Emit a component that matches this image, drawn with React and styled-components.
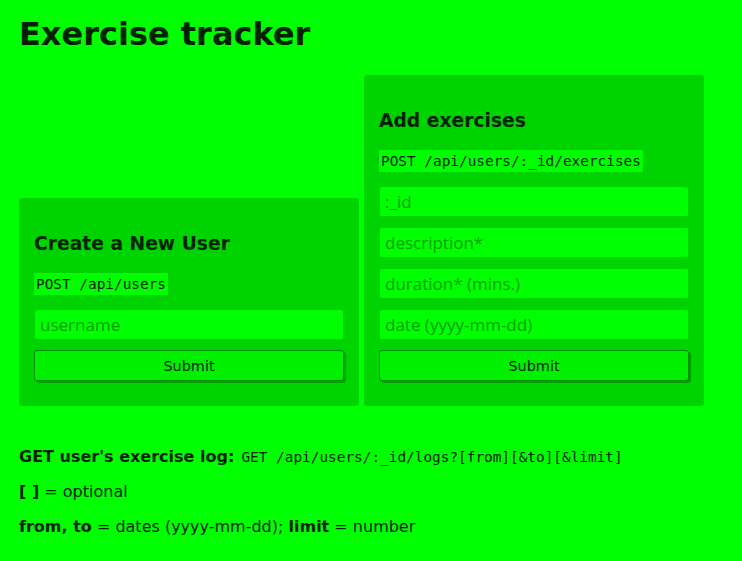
import styled, { createGlobalStyle } from "styled-components"

const GlobalStyle = createGlobalStyle`
    html, body {
        margin: 0;
        background: #00ff00;
    }
    body {
        font-family: "DejaVu Sans", sans-serif;
        color: #002200;
    }
`

const Page = styled.div`
    padding: 16px 19px 20px;
`

const Title = styled.h1`
    margin: 0 0 22px;
    font-size: 32px;
    font-weight: bold;
    line-height: 37px;
`

const Panels = styled.div`
    display: flex;
    align-items: flex-end;
    gap: 5px;
`

const Panel = styled.form`
    width: 340px;
    box-sizing: border-box;
    background: #00d400;
    border-radius: 3px;
    padding: 17px 15px 25px;
    display: flex;
    flex-direction: column;
`

const PanelTitle = styled.h3`
    margin: 18px 0 18px;
    font-size: 18.72px;
    line-height: 22px;
`

const Code = styled.code`
    font-family: "DejaVu Sans Mono", monospace;
    font-size: 14.4px;
    line-height: 16px;
    background: #00ff00;
    padding: ${(p) => (p.$block ? "3px 2px" : "2px 2px")};
    display: inline-block;
    align-self: flex-start;
    margin-bottom: ${(p) => (p.$block ? "14px" : "0")};
`

const Input = styled.input`
    box-sizing: border-box;
    width: 100%;
    height: 31px;
    margin: 0 0 10px;
    border: 1px solid #00d400;
    border-radius: 3px;
    background: #00ff00;
    padding: 0 5px;
    font-family: "Open Sans", sans-serif;
    font-size: 17px;
    color: #002200;
    outline: none;
    &::placeholder {
        color: #00a000;
    }
`

const Button = styled.button`
    box-sizing: border-box;
    width: 100%;
    height: 31px;
    margin: 0;
    border: 1px solid #008a00;
    border-radius: 3px;
    background: #00f000;
    box-shadow: 2px 2px 0 #00a000;
    font-family: "DejaVu Sans", sans-serif;
    font-size: 14.4px;
    padding-top: 2px;
    color: #002200;
    cursor: pointer;
`

const Note = styled.p`
    margin: 0 0 15px;
    font-size: 16px;
    line-height: 20px;
`

const Notes = styled.div`
    margin-top: 41px;
`

const App = () => {
    const exerciseFields = [":_id", "description*", "duration* (mins.)", "date (yyyy-mm-dd)"]

    return (
        <Page>
            <GlobalStyle />
            <Title>Exercise tracker</Title>
            <Panels>
                <Panel onSubmit={(e) => e.preventDefault()}>
                    <PanelTitle>Create a New User</PanelTitle>
                    <Code $block>POST /api/users</Code>
                    <Input placeholder="username" />
                    <Button type="submit">Submit</Button>
                </Panel>
                <Panel onSubmit={(e) => e.preventDefault()}>
                    <PanelTitle>Add exercises</PanelTitle>
                    <Code $block>POST /api/users/:_id/exercises</Code>
                    {exerciseFields.map((f) => (
                        <Input key={f} placeholder={f} />
                    ))}
                    <Button type="submit">Submit</Button>
                </Panel>
            </Panels>
            <Notes>
                <Note>
                    <strong>GET user's exercise log:</strong> <Code>GET /api/users/:_id/logs?[from][&amp;to][&amp;limit]</Code>
                </Note>
                <Note>
                    <strong>[ ]</strong> = optional
                </Note>
                <Note>
                    <strong>from, to</strong> = dates (yyyy-mm-dd); <strong>limit</strong> = number
                </Note>
            </Notes>
        </Page>
    )
}

export default App
